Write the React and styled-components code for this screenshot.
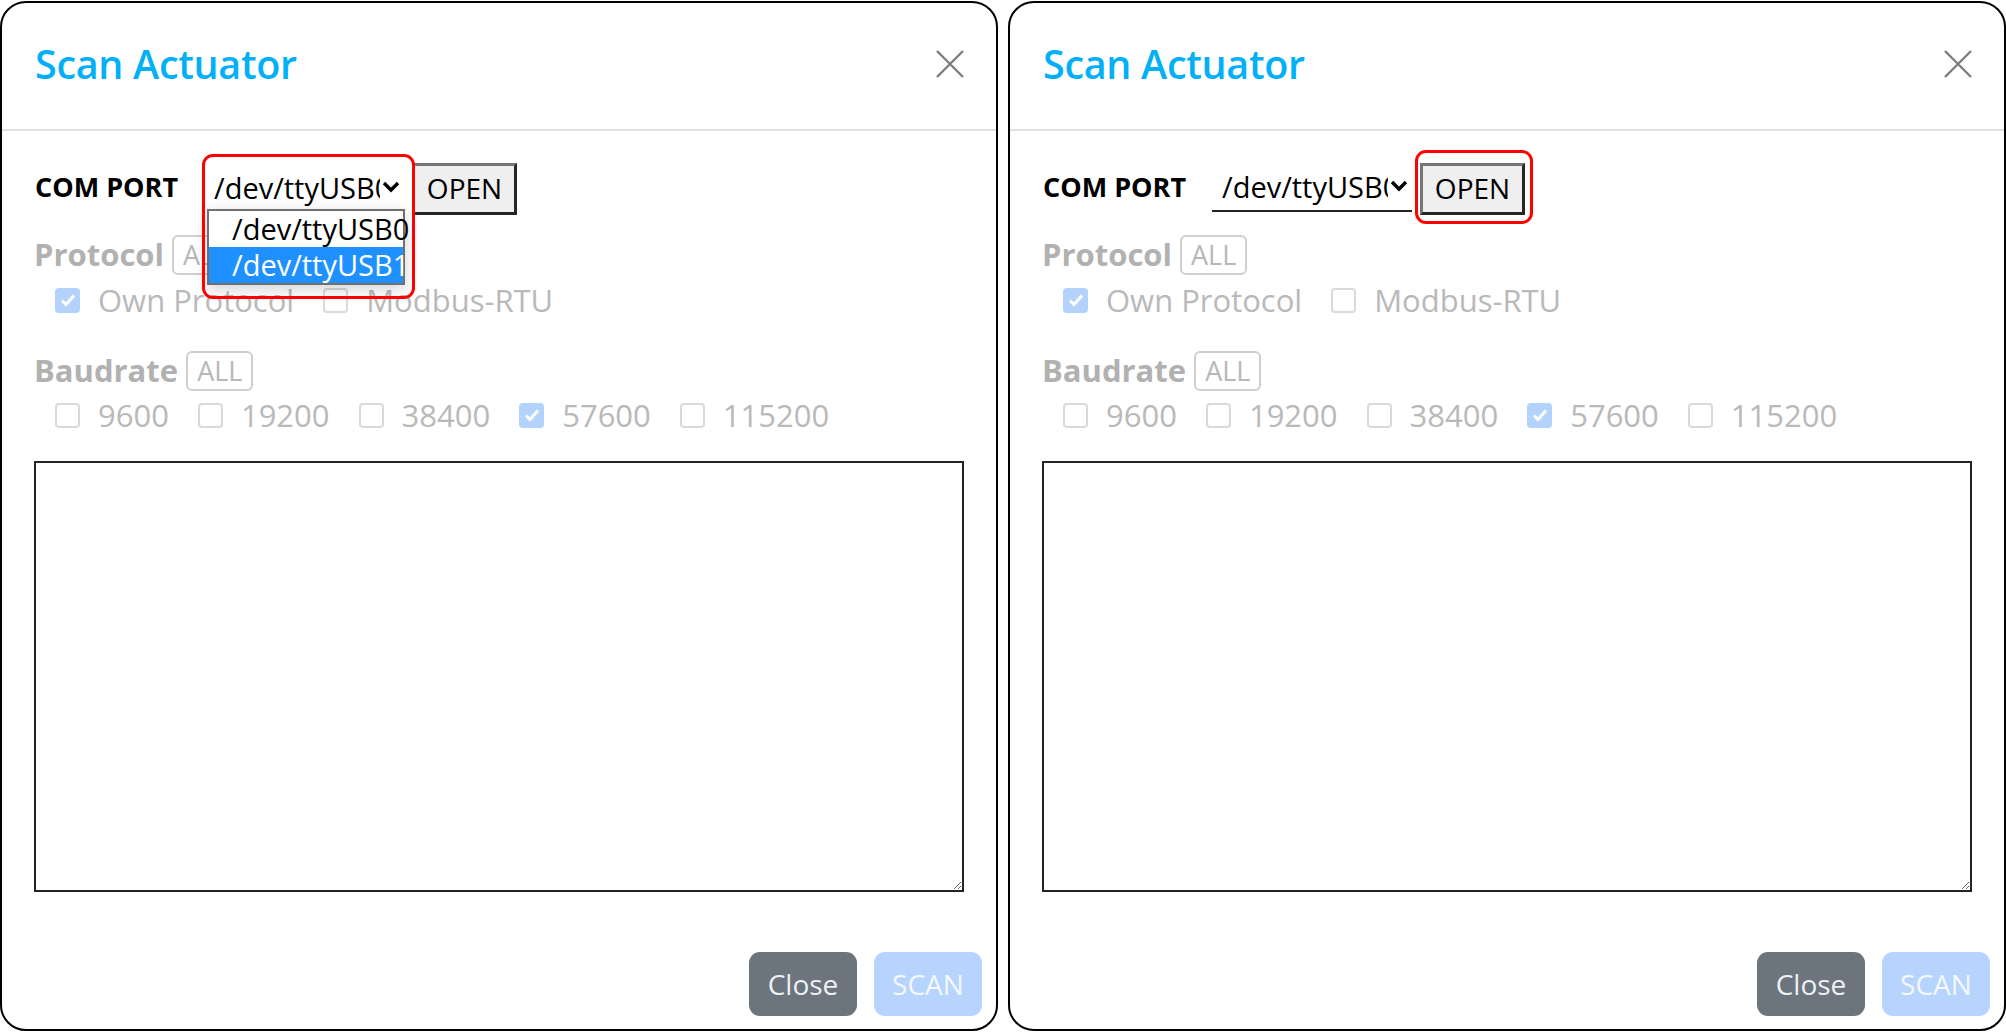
import React from "react";
import styled, { createGlobalStyle } from "styled-components";

const GlobalStyle = createGlobalStyle`
  html, body {
    margin: 0;
    padding: 0;
    background: #fff;
  }
  body {
    font-family: "Open Sans", "Noto Sans", sans-serif;
    color: #212529;
  }
`;

const Page = styled.div`
  display: flex;
  gap: 10px;
  padding-top: 1px;
  width: 2006px;
  height: 1032px;
  box-sizing: border-box;
`;

const Modal = styled.div`
  width: 998px;
  height: 1030px;
  box-sizing: border-box;
  border: 2px solid #000;
  border-radius: 26px;
  display: flex;
  flex-direction: column;
  background: #fff;
`;

const Header = styled.div`
  height: 128px;
  box-sizing: border-box;
  padding: 0 31px 5px 33px;
  display: flex;
  align-items: center;
  justify-content: space-between;
  border-bottom: 2px solid #dee2e6;
`;

const Title = styled.h5`
  margin: 0;
  font-size: 39.5px;
  font-weight: 600;
  color: #02b0f8;
  letter-spacing: -0.3px;
`;

const CloseX = styled.button`
  width: 30px;
  height: 30px;
  padding: 0;
  border: 0;
  background: transparent;
  display: flex;
  align-items: center;
  justify-content: center;
`;

const Body = styled.div`
  flex: 1;
  padding: 32px 32px 0 32px;
  display: flex;
  flex-direction: column;
`;

const ComRow = styled.div`
  position: relative;
  display: flex;
  align-items: center;
  height: 52px;
`;

const ComLabel = styled.label`
  width: 170px;
  padding: 0 0 6px 1px;
  box-sizing: border-box;
  font-size: 27px;
  font-weight: 700;
  color: #000;
`;

const SelectBox = styled.div`
  position: relative;
  width: 200px;
  height: 46px;
  box-sizing: border-box;
  border-bottom: ${(p) => (p.$open ? "none" : "2px solid #212529")};
  display: flex;
  align-items: center;
  padding: 0 0 4px 10px;
  font-size: 29px;
  color: #000;
`;

const SelectText = styled.span`
  width: 166px;
  overflow: hidden;
  white-space: nowrap;
`;

const Chevron = styled.svg`
  margin-left: 2px;
  flex: none;
`;

const OptionList = styled.div`
  position: absolute;
  left: 3px;
  top: 43px;
  width: 198px;
  box-sizing: border-box;
  border: 2px solid #707070;
  background: #fff;
  box-shadow: 0 4px 14px rgba(0, 0, 0, 0.18);
  z-index: 2;
`;

const Option = styled.div`
  height: 36px;
  line-height: 36px;
  padding-left: 23px;
  font-size: 29px;
  color: ${(p) => (p.$active ? "#fff" : "#000")};
  background: ${(p) => (p.$active ? "#1e90ff" : "#fff")};
`;

const OpenButton = styled.button`
  margin-left: 8px;
  width: 105px;
  height: 52px;
  box-sizing: border-box;
  border: 3px solid;
  border-color: #767676 #262626 #262626 #767676;
  background: #efefef;
  font-family: inherit;
  font-size: 28px;
  color: #000;
  padding: 0 0 2px;
`;

const Highlight = styled.div`
  position: absolute;
  left: ${(p) => p.$left}px;
  top: ${(p) => p.$top}px;
  width: ${(p) => p.$w}px;
  height: ${(p) => p.$h}px;
  box-sizing: border-box;
  border: 3px solid #ff0000;
  border-radius: 11px;
  z-index: 3;
  pointer-events: none;
`;

const GroupTitle = styled.div`
  display: flex;
  align-items: center;
  gap: 8px;
  height: 40px;
  margin-top: ${(p) => p.$mt}px;
`;

const GroupName = styled.span`
  font-size: 31px;
  font-weight: 700;
  color: #b1b1b1;
  padding-bottom: 2px;
`;

const AllBadge = styled.span`
  height: 40px;
  box-sizing: border-box;
  padding: 0 9px 1px;
  border: 2px solid #cfcfcf;
  border-radius: 6px;
  display: flex;
  align-items: center;
  font-size: 27px;
  color: #b8b8b8;
`;

const CheckRow = styled.div`
  display: flex;
  align-items: center;
  height: 48px;
  margin-top: ${(p) => p.$mt}px;
  padding-left: 21px;
  gap: 29px;
`;

const CheckItem = styled.label`
  display: flex;
  align-items: center;
  gap: 18px;
  font-size: 31px;
  color: #b9b9b9;
`;

const Box = styled.span`
  width: 25px;
  height: 25px;
  box-sizing: border-box;
  border-radius: 4px;
  border: ${(p) => (p.$checked ? "none" : "2px solid #dadada")};
  background: ${(p) => (p.$checked ? "#b3d3fc" : "#fff")};
  display: flex;
  align-items: center;
  justify-content: center;
`;

const Log = styled.textarea`
  margin-top: 22px;
  height: 431px;
  box-sizing: border-box;
  border: 2px solid #212529;
  resize: both;
  font-family: inherit;
  font-size: 20px;
  outline: none;
`;

const Footer = styled.div`
  display: flex;
  justify-content: flex-end;
  gap: 17px;
  padding: 0 14px 13px 0;
`;

const FooterButton = styled.button`
  width: 108px;
  height: 64px;
  border: 0;
  border-radius: 11px;
  font-family: inherit;
  font-size: 28px;
  color: ${(p) => (p.$disabled ? "#f4f8ff" : "#eef0f2")};
  background: ${(p) => (p.$disabled ? "#b6d4fe" : "#6c757d")};
`;

const Check = ({ checked, label }) => (
  <CheckItem>
    <Box $checked={checked}>
      {checked && (
        <svg width="16" height="14" viewBox="0 0 16 14">
          <path d="M2 7.5 L6 11.5 L14 2.5" fill="none" stroke="#fff" strokeWidth="3" />
        </svg>
      )}
    </Box>
    {label}
  </CheckItem>
);

const ScanModal = ({ open }) => (
  <Modal>
    <Header>
      <Title>Scan Actuator</Title>
      <CloseX aria-label="close">
        <svg width="28" height="28" viewBox="0 0 28 28">
          <path d="M1 1 L27 27 M27 1 L1 27" stroke="#7f7f7f" strokeWidth="2.4" />
        </svg>
      </CloseX>
    </Header>
    <Body>
      <ComRow>
        <ComLabel>COM PORT</ComLabel>
        <SelectBox $open={open}>
          <SelectText>/dev/ttyUSB0</SelectText>
          <Chevron width="18" height="12" viewBox="0 0 18 12">
            <path d="M2 2 L9 9 L16 2" fill="none" stroke="#000" strokeWidth="3.4" />
          </Chevron>
          {open && (
            <OptionList>
              <Option>/dev/ttyUSB0</Option>
              <Option $active>/dev/ttyUSB1</Option>
            </OptionList>
          )}
        </SelectBox>
        <OpenButton>OPEN</OpenButton>
        {open ? (
          <Highlight $left={168} $top={-9} $w={213} $h={145} />
        ) : (
          <Highlight $left={373} $top={-13} $w={118} $h={74} />
        )}
      </ComRow>

      <GroupTitle $mt={20}>
        <GroupName>Protocol</GroupName>
        <AllBadge>ALL</AllBadge>
      </GroupTitle>
      <CheckRow $mt={1}>
        <Check checked label="Own Protocol" />
        <Check label="Modbus-RTU" />
      </CheckRow>

      <GroupTitle $mt={27}>
        <GroupName>Baudrate</GroupName>
        <AllBadge>ALL</AllBadge>
      </GroupTitle>
      <CheckRow $mt={0}>
        <Check label="9600" />
        <Check label="19200" />
        <Check label="38400" />
        <Check checked label="57600" />
        <Check label="115200" />
      </CheckRow>

      <Log readOnly />
    </Body>
    <Footer>
      <FooterButton>Close</FooterButton>
      <FooterButton $disabled>SCAN</FooterButton>
    </Footer>
  </Modal>
);

export default function App() {
  return (
    <>
      <GlobalStyle />
      <Page>
        <ScanModal open />
        <ScanModal />
      </Page>
    </>
  );
}
